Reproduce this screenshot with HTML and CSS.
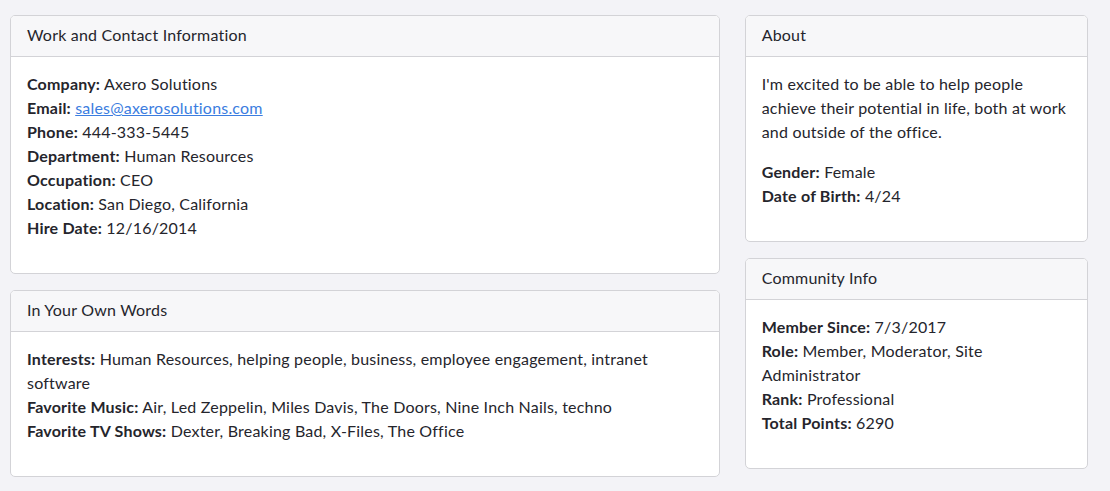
FILE: index.html
```html
<!DOCTYPE html>
<html>
<head>
<meta charset="utf-8">
<link rel="stylesheet" href="styles.css">
</head>
<body>
<div class="page">
  <div class="col col-left">
    <div class="card">
      <div class="card-header">Work and Contact Information</div>
      <div class="card-body">
        <p>
          <b>Company:</b> Axero Solutions<br>
          <b>Email:</b> <a href="#">sales@axerosolutions.com</a><br>
          <b>Phone:</b> 444-333-5445<br>
          <b>Department:</b> Human Resources<br>
          <b>Occupation:</b> CEO<br>
          <b>Location:</b> San Diego, California<br>
          <b>Hire Date:</b> 12/16/2014
        </p>
      </div>
    </div>
    <div class="card">
      <div class="card-header">In Your Own Words</div>
      <div class="card-body">
        <p>
          <b>Interests:</b> Human Resources, helping people, business, employee engagement, intranet software<br>
          <b>Favorite Music:</b> Air, Led Zeppelin, Miles Davis, The Doors, Nine Inch Nails, techno<br>
          <b>Favorite TV Shows:</b> Dexter, Breaking Bad, X-Files, The Office
        </p>
      </div>
    </div>
  </div>
  <div class="col col-right">
    <div class="card">
      <div class="card-header">About</div>
      <div class="card-body">
        <p>I'm excited to be able to help people achieve their potential in life, both at work and outside of the office.</p>
        <p>
          <b>Gender:</b> Female<br>
          <b>Date of Birth:</b> 4/24
        </p>
      </div>
    </div>
    <div class="card">
      <div class="card-header">Community Info</div>
      <div class="card-body">
        <p>
          <b>Member Since:</b> 7/3/2017<br>
          <b>Role:</b> Member, Moderator, Site Administrator<br>
          <b>Rank:</b> Professional<br>
          <b>Total Points:</b> 6290
        </p>
      </div>
    </div>
  </div>
</div>
</body>
</html>
```
FILE: styles.css
```css
html, body {
  margin: 0;
  padding: 0;
}
body {
  background: #f3f3f7;
  font-family: Lato, "Noto Sans", sans-serif;
  font-size: 16px;
  line-height: 24px;
  letter-spacing: 0.2px;
  color: #25252c;
}
.page {
  display: flex;
  gap: 25px;
  padding: 15px 22px 0 10px;
}
.col {
  display: flex;
  flex-direction: column;
  gap: 16px;
}
.col-left {
  width: 711px;
}
.col-right {
  width: 344px;
}
.card {
  background: #fff;
  border: 1px solid #d3d3d7;
  border-radius: 5px;
  overflow: hidden;
}
.card-header {
  background: #f7f7f9;
  border-bottom: 1px solid #d3d3d7;
  padding: 7px 16px 9px;
}
.card-body {
  padding: 15px 16px 17px;
}
.card-body p {
  margin: 0 0 16px;
}
b {
  font-weight: 700;
}
a {
  color: #3b7de0;
  text-decoration: underline;
}
```
